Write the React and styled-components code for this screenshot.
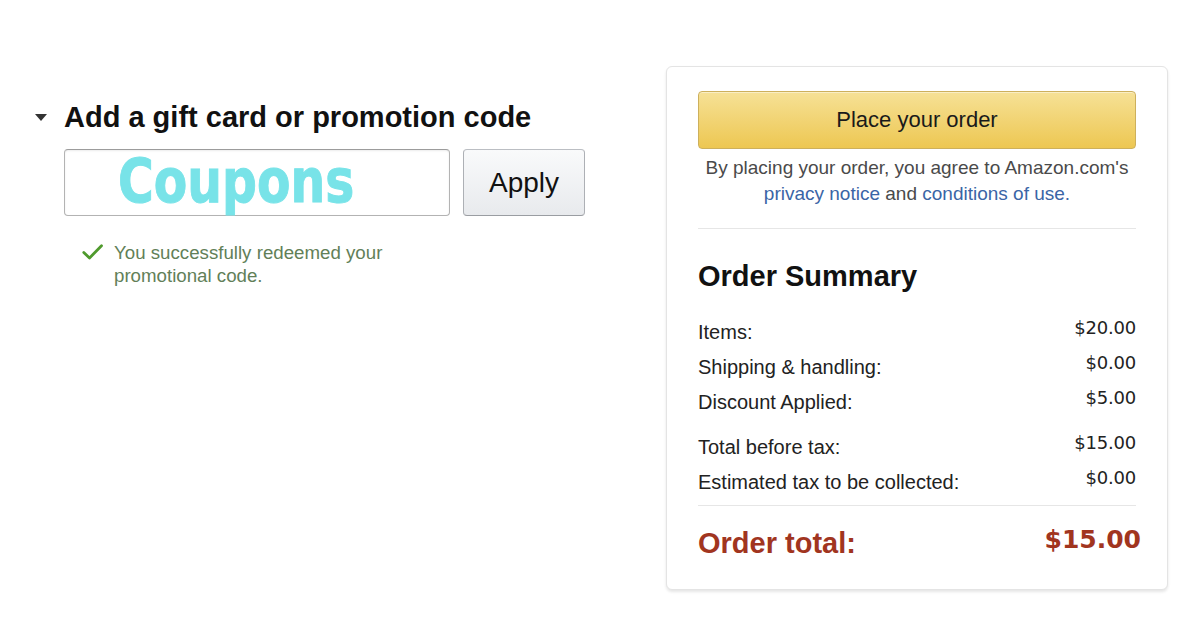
import React from "react";
import styled, { createGlobalStyle } from "styled-components";

const GlobalStyle = createGlobalStyle`
  html, body { margin: 0; padding: 0; background: #ffffff; }
  body { font-family: "Liberation Sans", Arial, sans-serif; color: #111; }
  * { box-sizing: border-box; }
`;

const Page = styled.div`
  width: 1200px;
  height: 617px;
  display: flex;
  justify-content: space-between;
  align-items: flex-start;
  padding: 0 32px 0 35px;
  overflow: hidden;
`;

const LeftColumn = styled.section`
  padding-top: 100px;
  display: flex;
  flex-direction: column;
`;

const HeadingRow = styled.div`
  display: flex;
  align-items: center;
  gap: 17px;
`;

const Title = styled.h2`
  margin: 0;
  font-size: 29px;
  line-height: 34px;
  font-weight: 700;
  color: #111;
`;

const FormArea = styled.div`
  margin-left: 29px;
  margin-top: 15px;
  display: flex;
  flex-direction: column;
`;

const CodeRow = styled.div`
  display: flex;
  gap: 13px;
`;

const CodeField = styled.div`
  width: 386px;
  height: 67px;
  border: 1px solid #b3b3b3;
  border-top-color: #9c9c9c;
  border-radius: 4px;
  box-shadow: inset 0 1px 2px rgba(0, 0, 0, 0.08);
  padding-left: 53px;
  display: flex;
  align-items: flex-start;
  background: #fff;
`;

const CouponText = styled.span`
  display: inline-block;
  font-family: "DejaVu Sans", Verdana, sans-serif;
  font-weight: 700;
  font-size: 61px;
  line-height: 62px;
  color: #78e3e8;
  transform: scaleX(0.8);
  transform-origin: left center;
  white-space: nowrap;
  -webkit-text-stroke: 1px #78e3e8;
`;

const ApplyButton = styled.button`
  width: 122px;
  height: 67px;
  border: 1px solid;
  border-color: #bbbec3 #adb0b5 #9a9da2;
  border-radius: 4px;
  background: linear-gradient(to bottom, #f9fafb, #e8eaed);
  font-family: "Liberation Sans", Arial, sans-serif;
  font-size: 28px;
  line-height: 28px;
  color: #111;
  padding: 0;
  display: flex;
  align-items: center;
  justify-content: center;
`;

const SuccessRow = styled.div`
  margin-top: 25px;
  padding-left: 18px;
  display: flex;
  align-items: flex-start;
  gap: 11px;
`;

const CheckIcon = styled.svg`
  flex: none;
  margin-top: 3px;
`;

const SuccessText = styled.p`
  margin: 0;
  font-size: 18.7px;
  line-height: 23px;
  color: #627f58;
  width: 290px;
`;

const Card = styled.aside`
  margin-top: 66px;
  width: 502px;
  border: 1px solid #e4e4e4;
  border-radius: 6px;
  box-shadow: 0 2px 3px rgba(0, 0, 0, 0.1);
  padding: 24px 31px 29px 31px;
  display: flex;
  flex-direction: column;
  background: #fff;
`;

const PlaceButton = styled.button`
  width: 100%;
  height: 58px;
  border: 1px solid #cdb05c;
  border-radius: 4px;
  background: linear-gradient(to bottom, #f6e196, #edc752);
  box-shadow: inset 0 1px 0 rgba(255, 255, 255, 0.45);
  font-family: "Liberation Sans", Arial, sans-serif;
  font-size: 22px;
  line-height: 22px;
  color: #1a1a1a;
  padding: 0;
`;

const Agreement = styled.p`
  margin: 6px 0 0;
  text-align: center;
  font-size: 19px;
  line-height: 26px;
  color: #4a4a4a;
`;

const Link = styled.a`
  color: #3a65a6;
  text-decoration: none;
`;

const Divider = styled.hr`
  margin: ${(p) => p.$top}px 0 0;
  border: 0;
  border-top: 1px solid #e6e6e6;
  height: 0;
`;

const SummaryTitle = styled.h3`
  margin: 30px 0 0;
  font-size: 29px;
  line-height: 34px;
  font-weight: 700;
  color: #111;
`;

const Rows = styled.div`
  margin-top: ${(p) => p.$top}px;
  display: flex;
  flex-direction: column;
  gap: 11px;
`;

const Row = styled.div`
  display: flex;
  justify-content: space-between;
  align-items: flex-start;
`;

const Label = styled.span`
  font-size: 20px;
  line-height: 24px;
  color: #222;
`;

const Amount = styled.span`
  font-family: "DejaVu Sans", Verdana, sans-serif;
  font-size: 18px;
  line-height: 16px;
  letter-spacing: -0.2px;
  color: #222;
`;

const TotalRow = styled.div`
  margin-top: 20px;
  display: flex;
  justify-content: space-between;
  align-items: flex-start;
  color: #a1351f;
`;

const TotalLabel = styled.span`
  font-size: 29px;
  line-height: 34px;
  font-weight: 700;
`;

const TotalAmount = styled.span`
  font-family: "DejaVu Sans", Verdana, sans-serif;
  font-weight: 700;
  font-size: 25px;
  line-height: 28px;
  margin-right: -5px;
`;

const Caret = () => (
  <svg width="12" height="7" viewBox="0 0 12 7" aria-hidden="true">
    <path d="M0 0 L12 0 L6 7 Z" fill="#333" />
  </svg>
);

const firstRows = [
  ["Items:", "$20.00"],
  ["Shipping & handling:", "$0.00"],
  ["Discount Applied:", "$5.00"],
];

const secondRows = [
  ["Total before tax:", "$15.00"],
  ["Estimated tax to be collected:", "$0.00"],
];

export default function App() {
  return (
    <>
      <GlobalStyle />
      <Page>
        <LeftColumn>
          <HeadingRow>
            <Caret />
            <Title>Add a gift card or promotion code</Title>
          </HeadingRow>
          <FormArea>
            <CodeRow>
              <CodeField>
                <CouponText>Coupons</CouponText>
              </CodeField>
              <ApplyButton type="button">Apply</ApplyButton>
            </CodeRow>
            <SuccessRow>
              <CheckIcon width="21" height="16" viewBox="0 0 21 16" aria-hidden="true">
                <polyline
                  points="1.8,8.5 7.5,14 19.5,1.8"
                  fill="none"
                  stroke="#4f9a2d"
                  strokeWidth="2.8"
                  strokeLinecap="round"
                  strokeLinejoin="round"
                />
              </CheckIcon>
              <SuccessText>
                You successfully redeemed your promotional code.
              </SuccessText>
            </SuccessRow>
          </FormArea>
        </LeftColumn>

        <Card>
          <PlaceButton type="button">Place your order</PlaceButton>
          <Agreement>
            By placing your order, you agree to Amazon.com's
            <br />
            <Link href="#">privacy notice</Link> and{" "}
            <Link href="#">conditions of use.</Link>
          </Agreement>
          <Divider $top={21} />
          <SummaryTitle>Order Summary</SummaryTitle>
          <Rows $top={27}>
            {firstRows.map(([l, v]) => (
              <Row key={l}>
                <Label>{l}</Label>
                <Amount>{v}</Amount>
              </Row>
            ))}
          </Rows>
          <Rows $top={21}>
            {secondRows.map(([l, v]) => (
              <Row key={l}>
                <Label>{l}</Label>
                <Amount>{v}</Amount>
              </Row>
            ))}
          </Rows>
          <Divider $top={11} />
          <TotalRow>
            <TotalLabel>Order total:</TotalLabel>
            <TotalAmount>$15.00</TotalAmount>
          </TotalRow>
        </Card>
      </Page>
    </>
  );
}
